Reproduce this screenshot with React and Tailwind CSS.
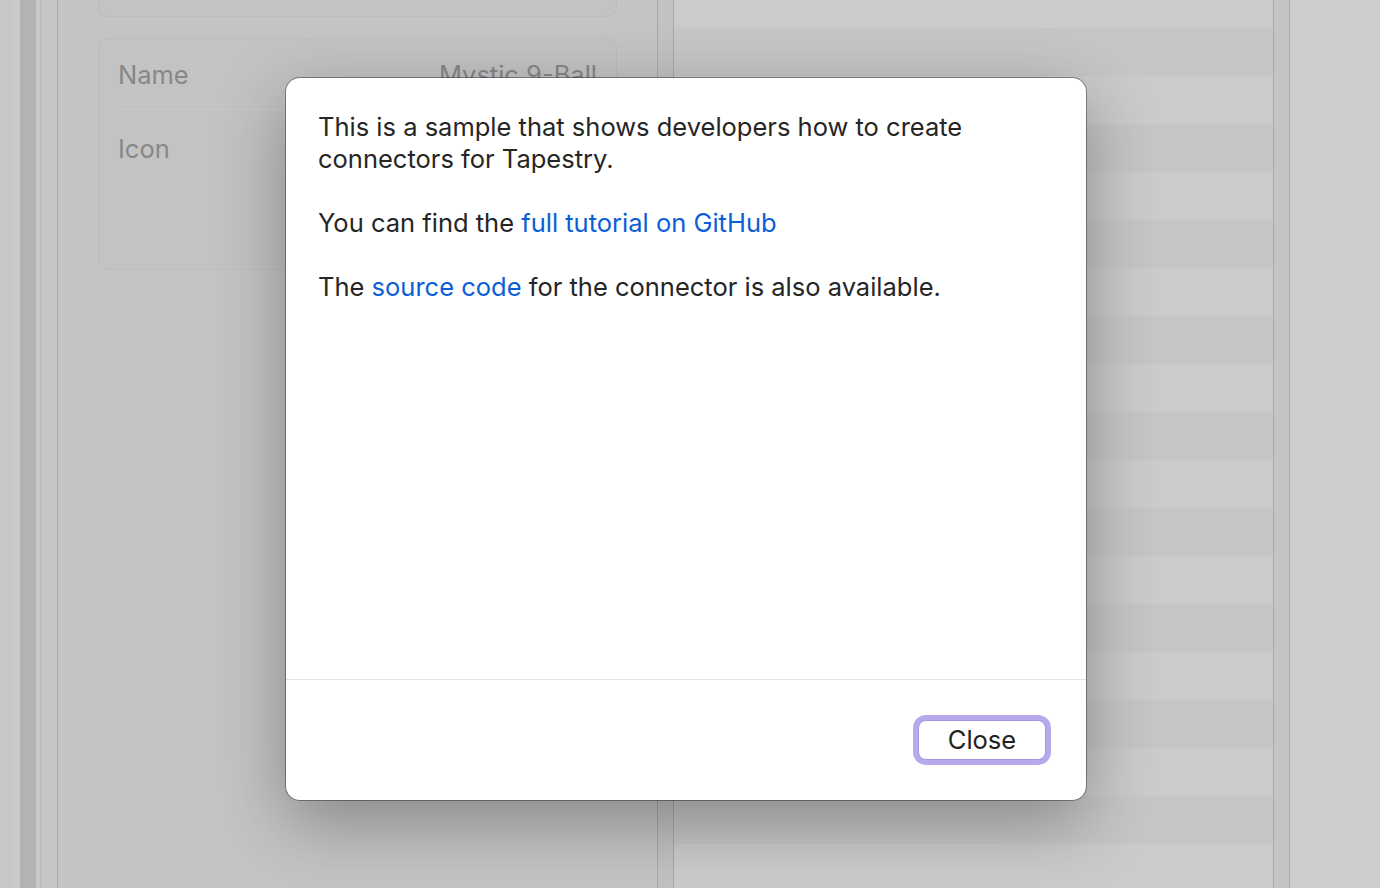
const font = { fontFamily: "Inter, 'Noto Sans', sans-serif" };

function Stripes() {
  const rows = Array.from({ length: 18 }, (_, i) => i);
  return (
    <div className="flex-1 flex flex-col bg-[#cbcbcb]">
      <div className="h-[28px] shrink-0 bg-[#cbcbcb]" />
      {rows.map((i) => (
        <div key={i} className={i % 2 === 0 ? "h-[48px] shrink-0 bg-[#c5c6c5]" : "h-[48px] shrink-0 bg-[#cbcbcb]"} />
      ))}
    </div>
  );
}

function Sidebar() {
  return (
    <div className="flex h-full shrink-0">
      <div className="w-[13px] bg-[#c7c7c7]" />
      <div className="w-[7px] bg-[#cacaca]" />
      <div className="w-[16px] bg-[#b3b3b3]" />
      <div className="w-[4px] bg-[#c9c9c9]" />
      <div className="w-[2px] bg-[#bdbdbd]" />
      <div className="w-[15px] bg-[#c6c6c6]" />
      <div className="w-px bg-[#aaaaaa]" />
    </div>
  );
}

function DetailPanel() {
  return (
    <div className="w-[599px] shrink-0 bg-[#c4c4c4] px-[40px] flex flex-col gap-[21px]">
      <div className="h-[17px] rounded-b-[10px] border border-t-0 border-[#bcbcbc] bg-[#c3c3c3]" />
      <div className="h-[232px] rounded-[10px] border border-[#bcbcbc] bg-[#c3c3c3] px-[19px] text-[25.5px] text-[#878787]" style={font}>
        <div className="h-[71px] pt-[3px] flex items-center justify-between border-b border-[#c9c9c9]">
          <span>Name</span>
          <span>Mystic 9-Ball</span>
        </div>
        <div className="pt-[24px] leading-[30px]">Icon</div>
      </div>
    </div>
  );
}

function Modal() {
  return (
    <div
      className="absolute left-[286px] top-[78px] w-[800px] h-[722px] bg-white rounded-[14px] flex flex-col shadow-[0_0_0_1px_rgba(0,0,0,0.35),0_22px_70px_rgba(0,0,0,0.32)]"
      style={font}
    >
      <div className="flex-1 px-[32px] pt-[33px] text-[25.5px] leading-[32px] text-[#262626] flex flex-col gap-[32px]">
        <p>This is a sample that shows developers how to create connectors for Tapestry.</p>
        <p>
          You can find the <a className="text-[#0a5fd6]">full tutorial on GitHub</a>
        </p>
        <p>
          The <a className="text-[#0a5fd6]">source code</a> for the connector is also available.
        </p>
      </div>
      <div className="h-[121px] shrink-0 border-t border-[#e4e4e4] flex items-center justify-end pr-[35px]">
        <div className="rounded-[13px] p-[5px] bg-[#b8a9ec]">
          <button className="w-[128px] h-[40px] rounded-[8px] bg-white border border-[#a797df] text-[25.5px] text-[#222] flex items-center justify-center">
            Close
          </button>
        </div>
      </div>
    </div>
  );
}

export default function App() {
  return (
    <div className="relative w-[1380px] h-[888px] overflow-hidden flex bg-[#c4c4c4]">
      <Sidebar />
      <DetailPanel />
      <div className="w-px bg-[#a8a8a8]" />
      <div className="w-[15px] bg-[#c2c2c2]" />
      <div className="w-px bg-[#a8a8a8]" />
      <div className="w-[599px] shrink-0 flex">
        <Stripes />
      </div>
      <div className="w-px bg-[#a8a8a8]" />
      <div className="w-[15px] bg-[#c4c4c4]" />
      <div className="w-px bg-[#a8a8a8]" />
      <div className="flex-1 bg-[#cecece]" />
      <Modal />
    </div>
  );
}
